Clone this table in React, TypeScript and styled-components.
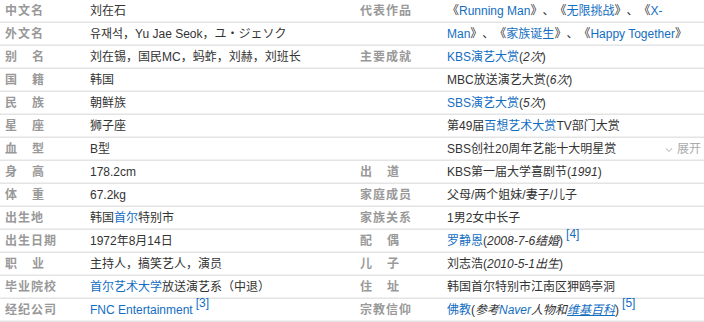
import React from "react";
import styled, { createGlobalStyle } from "styled-components";

const GlobalStyle = createGlobalStyle`
  body {
    margin: 0;
    background: #fff;
  }
`;

const StyledInfo = styled.div`
  display: flex;
  width: 704px;
  overflow: hidden;
  font-family: "Liberation Sans", Arial, "Noto Sans CJK SC", sans-serif;
  font-size: 12px;
  color: #333;
  text-spacing-trim: space-all;
  a {
    color: #136ec2;
    text-decoration: none;
  }
  i {
    font-style: italic;
  }
`;

const Column = styled.dl<{ $width: number; $label: number }>`
  margin: 0;
  padding-left: 5px;
  width: ${(p) => p.$width}px;
  box-sizing: border-box;
  display: grid;
  grid-template-columns: ${(p) => p.$label}px 1fr;
  line-height: 23px;
  background: repeating-linear-gradient(
    to bottom,
    transparent 0,
    transparent 21px,
    #f1f1f1 21px,
    #f1f1f1 22px,
    #e4e4e4 22px,
    #e4e4e4 23px
  );
`;

const Label = styled.dt<{ $spaced?: boolean }>`
  margin: 0;
  font-weight: bold;
  color: #999;
  white-space: nowrap;
  letter-spacing: ${(p) => (p.$spaced ? "15px" : "1px")};
`;

const Value = styled.dd`
  margin: 0;
  white-space: nowrap;
`;

const Line = styled.div`
  display: flex;
  justify-content: space-between;
  align-items: center;
  height: 23px;
`;

const Expand = styled.span`
  display: flex;
  align-items: center;
  gap: 4px;
  color: #aaa;
  margin-right: 3px;
  svg {
    display: block;
  }
`;

const Sup = styled.sup`
  font-size: 12px;
  line-height: 0;
  vertical-align: 7px;
  margin-left: 3px;
`;

const Wiki = styled.a`
  && {
    text-decoration: underline;
  }
`;

type Row = { label: string; value: React.ReactNode };

const left: Row[] = [
  { label: "中文名", value: "刘在石" },
  { label: "外文名", value: "유재석，Yu Jae Seok，ユ・ジェソク" },
  { label: "别名", value: "刘在锡，国民MC，蚂蚱，刘赫，刘班长" },
  { label: "国籍", value: "韩国" },
  { label: "民族", value: "朝鲜族" },
  { label: "星座", value: "狮子座" },
  { label: "血型", value: "B型" },
  { label: "身高", value: "178.2cm" },
  { label: "体重", value: "67.2kg" },
  {
    label: "出生地",
    value: (
      <>
        韩国<a href="#">首尔</a>特别市
      </>
    ),
  },
  { label: "出生日期", value: "1972年8月14日" },
  { label: "职业", value: "主持人，搞笑艺人，演员" },
  {
    label: "毕业院校",
    value: (
      <>
        <a href="#">首尔艺术大学</a>放送演艺系（中退）
      </>
    ),
  },
  {
    label: "经纪公司",
    value: (
      <>
        <a href="#">FNC Entertainment</a>
        <Sup>
          <a href="#">[3]</a>
        </Sup>
      </>
    ),
  },
];

const right: Row[] = [
  {
    label: "代表作品",
    value: (
      <>
        《<a href="#">Running Man</a>》、《<a href="#">无限挑战</a>》、《<a href="#">X-</a>
        <br />
        <a href="#">Man</a>》、《<a href="#">家族诞生</a>》、《<a href="#">Happy Together</a>》
      </>
    ),
  },
  {
    label: "主要成就",
    value: (
      <>
        <Line>
          <span>
            <a href="#">KBS演艺大赏</a>(<i>2次</i>)
          </span>
        </Line>
        <Line>
          <span>
            MBC放送演艺大赏(<i>6次</i>)
          </span>
        </Line>
        <Line>
          <span>
            <a href="#">SBS演艺大赏</a>(<i>5次</i>)
          </span>
        </Line>
        <Line>
          <span>
            第49届<a href="#">百想艺术大赏</a>TV部门大赏
          </span>
        </Line>
        <Line>
          <span>SBS创社20周年艺能十大明星赏</span>
          <Expand>
            <svg width="8" height="6" viewBox="0 0 8 6">
              <polyline points="1,1.5 4,4.5 7,1.5" fill="none" stroke="#ccc" strokeWidth="1.2" />
            </svg>
            展开
          </Expand>
        </Line>
      </>
    ),
  },
  {
    label: "出道",
    value: (
      <>
        KBS第一届大学喜剧节(<i>1991</i>)
      </>
    ),
  },
  { label: "家庭成员", value: "父母/两个姐妹/妻子/儿子" },
  { label: "家族关系", value: "1男2女中长子" },
  {
    label: "配偶",
    value: (
      <>
        <a href="#">罗静恩</a>(<i>2008-7-6结婚</i>)
        <Sup>
          <a href="#">[4]</a>
        </Sup>
      </>
    ),
  },
  {
    label: "儿子",
    value: (
      <>
        刘志浩(<i>2010-5-1出生</i>)
      </>
    ),
  },
  { label: "住址", value: "韩国首尔特别市江南区狎鸥亭洞" },
  {
    label: "宗教信仰",
    value: (
      <>
        <a href="#">佛教</a>(
        <i>
          参考<a href="#">Naver</a>人物和<Wiki href="#">维基百科</Wiki>
        </i>
        )
        <Sup>
          <a href="#">[5]</a>
        </Sup>
      </>
    ),
  },
];

function renderRows(rows: Row[]) {
  return rows.map((r) => (
    <React.Fragment key={r.label}>
      <Label $spaced={r.label.length === 2}>{r.label}</Label>
      <Value>{r.value}</Value>
    </React.Fragment>
  ));
}

function App() {
  return (
    <StyledInfo>
      <GlobalStyle />
      <Column $width={355} $label={85}>
        {renderRows(left)}
      </Column>
      <Column $width={349} $label={87}>
        {renderRows(right)}
      </Column>
    </StyledInfo>
  );
}

export default App;
